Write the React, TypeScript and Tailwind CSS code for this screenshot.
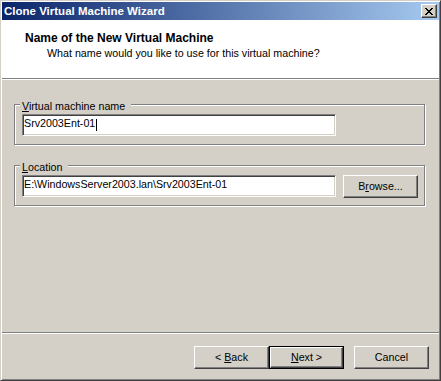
import React from "react";

function Btn({
  children,
  isDefault,
  className = "",
}: {
  children: React.ReactNode;
  isDefault?: boolean;
  className?: string;
}) {
  const raised =
    "flex items-center justify-center bg-[#d4d0c8] border border-t-white border-l-white border-r-[#404040] border-b-[#404040] shadow-[inset_-1px_-1px_0_#808080]";
  if (isDefault) {
    return (
      <div className={`w-[75px] h-[23px] border border-black flex ${className}`}>
        <div className={`flex-1 ${raised}`}>{children}</div>
      </div>
    );
  }
  return <div className={`w-[75px] h-[23px] ${raised} ${className}`}>{children}</div>;
}

function Edit({ children }: { children: React.ReactNode }) {
  return (
    <div className="w-[314px] h-[22px] bg-white border border-t-[#808080] border-l-[#808080] border-r-white border-b-white shadow-[inset_1px_1px_0_#404040,inset_-1px_-1px_0_#d4d0c8] pl-[1px] pt-[2px] flex items-start whitespace-nowrap overflow-hidden">
      {children}
    </div>
  );
}

function Group({
  label,
  children,
  className = "",
  pb,
}: {
  label: React.ReactNode;
  children: React.ReactNode;
  className?: string;
  pb: string;
}) {
  return (
    <div
      className={`ml-[12px] w-[411px] border border-[#808080] shadow-[1px_1px_0_#fff,inset_1px_1px_0_#fff] flex flex-col pl-[7px] ${pb} ${className}`}
    >
      <div className="-mt-[5px] -ml-[2px] self-start h-[13px] bg-[#d4d0c8] pl-[2px] pr-[6px]">
        {label}
      </div>
      <div className="mt-[1px]">{children}</div>
    </div>
  );
}

function CloseGlyph() {
  const rows = [
    [0, 1, 6, 7],
    [1, 2, 5, 6],
    [2, 3, 4, 5],
    [3, 4],
    [2, 3, 4, 5],
    [1, 2, 5, 6],
    [0, 1, 6, 7],
  ];
  return (
    <svg width="8" height="7" viewBox="0 0 8 7" shapeRendering="crispEdges">
      {rows.map((r, y) =>
        r.map((x) => <rect key={`${x}-${y}`} x={x} y={y} width="1" height="1" fill="#000" />)
      )}
    </svg>
  );
}

export default function App() {
  return (
    <div className="w-[441px] h-[381px] bg-[#d4d0c8] border border-t-[#d4d0c8] border-l-[#d4d0c8] border-r-[#404040] border-b-[#404040] shadow-[inset_1px_1px_0_#fff,inset_-1px_-1px_0_#808080] p-[1px] flex flex-col font-['Liberation_Sans',Arial,sans-serif] text-black text-[10.7px] leading-[13px]">
      {/* Title bar */}
      <div className="h-[18px] flex items-center bg-[linear-gradient(to_right,#0a246a,#a6caf0)]">
        <span className="pl-[2px] text-white font-bold text-[11.5px] leading-[18px] whitespace-nowrap">
          Clone Virtual Machine Wizard
        </span>
        <div className="ml-auto mr-[2px] w-[16px] h-[14px] bg-[#d4d0c8] border border-t-white border-l-white border-r-[#404040] border-b-[#404040] shadow-[inset_-1px_-1px_0_#808080] flex items-center justify-center pt-[1px]">
          <CloseGlyph />
        </div>
      </div>

      {/* Header */}
      <div className="h-[59px] bg-white border-b border-[#808080] pl-[23px] pt-[11px] flex flex-col">
        <div className="font-bold text-[12px] leading-[14px] whitespace-nowrap">
          Name of the New Virtual Machine
        </div>
        <div className="mt-[2px] pl-[22px] whitespace-nowrap">
          What name would you like to use for this virtual machine?
        </div>
      </div>
      <div className="h-px bg-white" />

      {/* Body */}
      <div className="flex-1 flex flex-col">
        <Group
          className="mt-[24px]"
          pb="pb-[8px]"
          label={
            <span>
              <u>V</u>irtual machine name
            </span>
          }
        >
          <Edit>
            <span>Srv2003Ent-01</span>
            <span className="ml-[1px] mt-[2px] w-px h-[12px] bg-black" />
          </Edit>
        </Group>

        <Group
          className="mt-[20px]"
          pb="pb-[7px]"
          label={
            <span>
              <u>L</u>ocation
            </span>
          }
        >
          <div className="flex items-start">
            <Edit>
              <span>E:\WindowsServer2003.lan\Srv2003Ent-01</span>
            </Edit>
            <Btn className="ml-[7px]">
              <span>
                B<u>r</u>owse...
              </span>
            </Btn>
          </div>
        </Group>

        {/* Bottom separator */}
        <div className="mt-auto h-px bg-[#808080]" />
        <div className="h-px bg-white" />

        {/* Buttons */}
        <div className="mt-[12px] mb-[10px] flex justify-end pr-[10px]">
          <Btn>
            <span>
              &lt; <u>B</u>ack
            </span>
          </Btn>
          <Btn isDefault>
            <span>
              <u>N</u>ext &gt;
            </span>
          </Btn>
          <Btn className="ml-[10px]">
            <span>Cancel</span>
          </Btn>
        </div>
      </div>
    </div>
  );
}
